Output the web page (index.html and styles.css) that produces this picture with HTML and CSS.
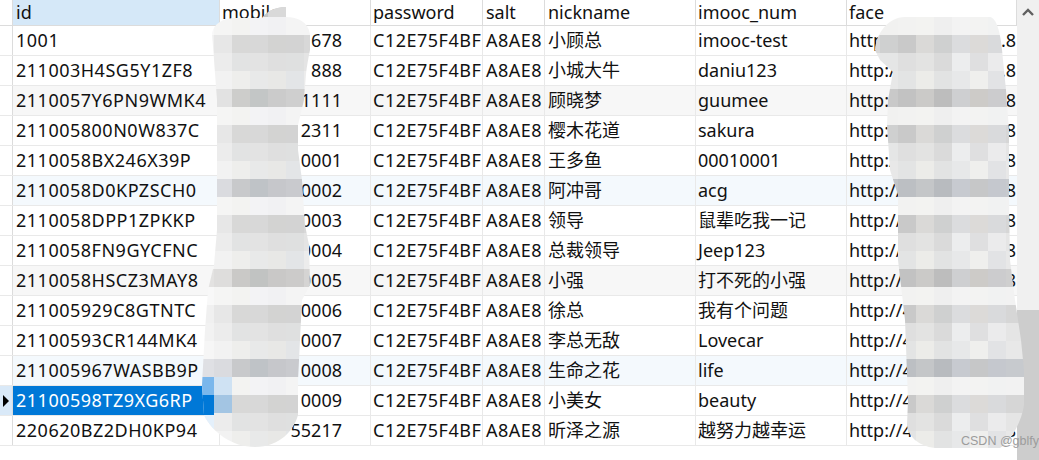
FILE: index.html
```html
<!DOCTYPE html>
<html lang="zh-CN">
<head>
<meta charset="utf-8">
<title>users</title>
<link rel="stylesheet" href="styles.css">
</head>
<body>
<div class="app">
  <div class="grid">
    <div class="row head">
      <div class="gut"></div><div class="c on">id</div><div class="c">mobile</div><div class="c">password</div><div class="c">salt</div><div class="c">nickname</div><div class="c">imooc_num</div><div class="c">face</div>
    </div>
    <div class="row">
      <div class="gut"></div><div class="c">1001</div><div class="c mob">678</div><div class="c">C12E75F4BF</div><div class="c">A8AE8</div><div class="c">小顾总</div><div class="c">imooc-test</div><div class="c url"><span>http://4</span><span>.8</span></div>
    </div>
    <div class="row">
      <div class="gut"></div><div class="c">211003H4SG5Y1ZF8</div><div class="c mob">888</div><div class="c">C12E75F4BF</div><div class="c">A8AE8</div><div class="c">小城大牛</div><div class="c">daniu123</div><div class="c url"><span>http://4</span><span>.8</span></div>
    </div>
    <div class="row grey">
      <div class="gut"></div><div class="c">2110057Y6PN9WMK4</div><div class="c mob">1111</div><div class="c">C12E75F4BF</div><div class="c">A8AE8</div><div class="c">顾晓梦</div><div class="c">guumee</div><div class="c url"><span>http://4</span><span>.8</span></div>
    </div>
    <div class="row">
      <div class="gut"></div><div class="c">211005800N0W837C</div><div class="c mob">2311</div><div class="c">C12E75F4BF</div><div class="c">A8AE8</div><div class="c">樱木花道</div><div class="c">sakura</div><div class="c url"><span>http://4</span><span>.8</span></div>
    </div>
    <div class="row">
      <div class="gut"></div><div class="c">2110058BX246X39P</div><div class="c mob">0001</div><div class="c">C12E75F4BF</div><div class="c">A8AE8</div><div class="c">王多鱼</div><div class="c">00010001</div><div class="c url"><span>http://4</span><span>.8</span></div>
    </div>
    <div class="row tint">
      <div class="gut"></div><div class="c">2110058D0KPZSCH0</div><div class="c mob">0002</div><div class="c">C12E75F4BF</div><div class="c">A8AE8</div><div class="c">阿冲哥</div><div class="c">acg</div><div class="c url"><span>http://4</span><span>.8</span></div>
    </div>
    <div class="row">
      <div class="gut"></div><div class="c">2110058DPP1ZPKKP</div><div class="c mob">0003</div><div class="c">C12E75F4BF</div><div class="c">A8AE8</div><div class="c">领导</div><div class="c">鼠辈吃我一记</div><div class="c url"><span>http://4</span><span>.8</span></div>
    </div>
    <div class="row">
      <div class="gut"></div><div class="c">2110058FN9GYCFNC</div><div class="c mob">0004</div><div class="c">C12E75F4BF</div><div class="c">A8AE8</div><div class="c">总裁领导</div><div class="c">Jeep123</div><div class="c url"><span>http://4</span><span>.8</span></div>
    </div>
    <div class="row grey">
      <div class="gut"></div><div class="c">2110058HSCZ3MAY8</div><div class="c mob">0005</div><div class="c">C12E75F4BF</div><div class="c">A8AE8</div><div class="c">小强</div><div class="c">打不死的小强</div><div class="c url"><span>http://4</span><span>.8</span></div>
    </div>
    <div class="row">
      <div class="gut"></div><div class="c">211005929C8GTNTC</div><div class="c mob">0006</div><div class="c">C12E75F4BF</div><div class="c">A8AE8</div><div class="c">徐总</div><div class="c">我有个问题</div><div class="c url"><span>http://4</span><span>.8</span></div>
    </div>
    <div class="row">
      <div class="gut"></div><div class="c">21100593CR144MK4</div><div class="c mob">0007</div><div class="c">C12E75F4BF</div><div class="c">A8AE8</div><div class="c">李总无敌</div><div class="c">Lovecar</div><div class="c url"><span>http://4</span><span>.8</span></div>
    </div>
    <div class="row tint">
      <div class="gut"></div><div class="c">211005967WASBB9P</div><div class="c mob">0008</div><div class="c">C12E75F4BF</div><div class="c">A8AE8</div><div class="c">生命之花</div><div class="c">life</div><div class="c url"><span>http://4</span><span>.8</span></div>
    </div>
    <div class="row">
      <div class="gut cur"><svg class="arrow" width="6" height="12" viewBox="0 0 6 12"><path d="M0 0L6 6L0 12Z"/></svg></div><div class="c sel">21100598TZ9XG6RP</div><div class="c mob">0009</div><div class="c">C12E75F4BF</div><div class="c">A8AE8</div><div class="c">小美女</div><div class="c">beauty</div><div class="c url"><span>http://4</span><span>.8</span></div>
    </div>
    <div class="row">
      <div class="gut"></div><div class="c">220620BZ2DH0KP94</div><div class="c mob">55217</div><div class="c">C12E75F4BF</div><div class="c">A8AE8</div><div class="c">昕泽之源</div><div class="c">越努力越幸运</div><div class="c url"><span>http://4</span><span>.8</span></div>
    </div>
  </div>
  <div class="scroll">
    <svg class="up" width="12" height="8" viewBox="0 0 12 8"><path d="M1 7L6 2L11 7" fill="none" stroke="#606060" stroke-width="2.4"/></svg>
    <div class="thumb"></div>
  </div>
  <svg class="mosaic" width="1039" height="460" viewBox="0 0 1039 460" shape-rendering="crispEdges">
    <defs>
      <pattern id="tl" patternUnits="userSpaceOnUse" x="196" y="17" width="126" height="90">
        <rect x="0" y="0" width="18" height="18" fill="#f8f8f8"/><rect x="18" y="0" width="18" height="18" fill="#f5f5f4"/><rect x="36" y="0" width="18" height="18" fill="#f3f3f1"/><rect x="54" y="0" width="18" height="18" fill="#f3f3f5"/><rect x="72" y="0" width="18" height="18" fill="#f1f1f3"/><rect x="90" y="0" width="18" height="18" fill="#f4f4f4"/><rect x="108" y="0" width="18" height="18" fill="#f4f4f4"/>
        <rect x="0" y="18" width="18" height="18" fill="#f0f0f0"/><rect x="18" y="18" width="18" height="18" fill="#e7e7e7"/><rect x="36" y="18" width="18" height="18" fill="#d8d8d7"/><rect x="54" y="18" width="18" height="18" fill="#d8d8d8"/><rect x="72" y="18" width="18" height="18" fill="#d3d3d2"/><rect x="90" y="18" width="18" height="18" fill="#d3d3d3"/><rect x="108" y="18" width="18" height="18" fill="#d8d8d8"/>
        <rect x="0" y="36" width="18" height="18" fill="#f2f2f2"/><rect x="18" y="36" width="18" height="18" fill="#ececec"/><rect x="36" y="36" width="18" height="18" fill="#e2e3e3"/><rect x="54" y="36" width="18" height="18" fill="#e3e3e3"/><rect x="72" y="36" width="18" height="18" fill="#dfdfdf"/><rect x="90" y="36" width="18" height="18" fill="#dfe0e0"/><rect x="108" y="36" width="18" height="18" fill="#e4e4e4"/>
        <rect x="0" y="54" width="18" height="18" fill="#f6f6f6"/><rect x="18" y="54" width="18" height="18" fill="#f2f2f2"/><rect x="36" y="54" width="18" height="18" fill="#eeeeec"/><rect x="54" y="54" width="18" height="18" fill="#e8e9e9"/><rect x="72" y="54" width="18" height="18" fill="#e8e8e6"/><rect x="90" y="54" width="18" height="18" fill="#e3e5e7"/><rect x="108" y="54" width="18" height="18" fill="#ececec"/>
        <rect x="0" y="72" width="18" height="18" fill="#e8e8e8"/><rect x="18" y="72" width="18" height="18" fill="#e2e2e2"/><rect x="36" y="72" width="18" height="18" fill="#cdcdcb"/><rect x="54" y="72" width="18" height="18" fill="#c3c6c6"/><rect x="72" y="72" width="18" height="18" fill="#cbcbcb"/><rect x="90" y="72" width="18" height="18" fill="#cfcfcf"/><rect x="108" y="72" width="18" height="18" fill="#d8d8d8"/>
      </pattern>
      <pattern id="tr" patternUnits="userSpaceOnUse" x="862" y="17" width="162" height="90">
        <rect x="0" y="0" width="18" height="18" fill="#f3f3f3"/><rect x="18" y="0" width="18" height="18" fill="#f1f1f0"/><rect x="36" y="0" width="18" height="18" fill="#f2f2f1"/><rect x="54" y="0" width="18" height="18" fill="#f3f3f1"/><rect x="72" y="0" width="18" height="18" fill="#efefef"/><rect x="90" y="0" width="18" height="18" fill="#f3f3f3"/><rect x="108" y="0" width="18" height="18" fill="#f3f3f2"/><rect x="126" y="0" width="18" height="18" fill="#f1f2f2"/><rect x="144" y="0" width="18" height="18" fill="#f2f2f2"/>
        <rect x="0" y="18" width="18" height="18" fill="#d8d8d8"/><rect x="18" y="18" width="18" height="18" fill="#cfd0d0"/><rect x="36" y="18" width="18" height="18" fill="#c9c9c9"/><rect x="54" y="18" width="18" height="18" fill="#dad9d7"/><rect x="72" y="18" width="18" height="18" fill="#cfd0d0"/><rect x="90" y="18" width="18" height="18" fill="#dbdcde"/><rect x="108" y="18" width="18" height="18" fill="#dcdad8"/><rect x="126" y="18" width="18" height="18" fill="#d9dadc"/><rect x="144" y="18" width="18" height="18" fill="#d6d6d6"/>
        <rect x="0" y="36" width="18" height="18" fill="#e8e8e8"/><rect x="18" y="36" width="18" height="18" fill="#e5e6e6"/><rect x="36" y="36" width="18" height="18" fill="#dfdfdf"/><rect x="54" y="36" width="18" height="18" fill="#e3e3e2"/><rect x="72" y="36" width="18" height="18" fill="#dadada"/><rect x="90" y="36" width="18" height="18" fill="#ecedee"/><rect x="108" y="36" width="18" height="18" fill="#dfdfe0"/><rect x="126" y="36" width="18" height="18" fill="#ebebec"/><rect x="144" y="36" width="18" height="18" fill="#e5e5e5"/>
        <rect x="0" y="54" width="18" height="18" fill="#ececec"/><rect x="18" y="54" width="18" height="18" fill="#e8e8e8"/><rect x="36" y="54" width="18" height="18" fill="#e3e4e4"/><rect x="54" y="54" width="18" height="18" fill="#ecece9"/><rect x="72" y="54" width="18" height="18" fill="#e2e3e3"/><rect x="90" y="54" width="18" height="18" fill="#e7e8e9"/><rect x="108" y="54" width="18" height="18" fill="#efefed"/><rect x="126" y="54" width="18" height="18" fill="#e2e3e5"/><rect x="144" y="54" width="18" height="18" fill="#e8e8e8"/>
        <rect x="0" y="72" width="18" height="18" fill="#d4d4d4"/><rect x="18" y="72" width="18" height="18" fill="#c9c9c9"/><rect x="36" y="72" width="18" height="18" fill="#c2c2c2"/><rect x="54" y="72" width="18" height="18" fill="#cbcac8"/><rect x="72" y="72" width="18" height="18" fill="#bdbdbd"/><rect x="90" y="72" width="18" height="18" fill="#cecfd1"/><rect x="108" y="72" width="18" height="18" fill="#cdcbc8"/><rect x="126" y="72" width="18" height="18" fill="#ccccce"/><rect x="144" y="72" width="18" height="18" fill="#cfcfcf"/>
      </pattern>
      <clipPath id="cl"><path d="M212 33C214 24 222 18 236 18L262 18C266 12 274 7 286 7L286 17C298 17 308 22 310 34L310 50C308 60 307 66 306 74L304 100L298 125L298 150L302 180L305 225L309 245L310 285L302 300L300 340L298 380L298 415C294 430 280 447 255 447C232 447 212 432 204 415L202 385L205 330L208 290L214 265L217 230L217 100L214 60Z" shape-rendering="geometricPrecision"/></clipPath>
      <clipPath id="cr"><path d="M875 50C876 34 888 17 905 17L990 17C996 18 1001 30 1003 60L1006 90L1009 130L1009 200L1010 260L1015 300L1021 340L1024 370L1024 405C1022 420 1012 440 1000 448L935 448C918 446 908 436 907 425L908 400L905 320L898 260L898 195L890 170L887 125L888 100L893 72L880 60Z" shape-rendering="geometricPrecision"/></clipPath>
    </defs>
    <g clip-path="url(#cl)">
      <rect x="196" y="0" width="126" height="460" fill="url(#tl)"/>
      <rect x="196" y="179" width="126" height="18" fill="#a8b4d0" opacity=".14"/>
      <rect x="196" y="359" width="126" height="18" fill="#a8b4d0" opacity=".14"/>
      <rect x="196" y="269" width="126" height="18" fill="#b0aa9c" opacity=".08"/>
      <rect x="196" y="377" width="18" height="18" fill="#7ab7ec"/>
      <rect x="214" y="377" width="18" height="18" fill="#cfe2f3"/>
      <rect x="196" y="395" width="18" height="20" fill="#0078d7"/>
      <rect x="214" y="395" width="18" height="18" fill="#a3c5e3"/>
      <rect x="196" y="415" width="18" height="16" fill="#e4f0fb"/>
      <rect x="268" y="7" width="18" height="10" fill="#d9d9d9"/>
    </g>
    <g clip-path="url(#cr)">
      <rect x="862" y="0" width="177" height="460" fill="url(#tr)"/>
      <rect x="862" y="179" width="177" height="18" fill="#9fb0d0" opacity=".14"/>
      <rect x="862" y="359" width="177" height="18" fill="#9fb0d0" opacity=".14"/>
    </g>
  </svg>
  <div class="mark">CSDN @gblfy</div>
</div>
</body>
</html>
```
FILE: styles.css
```css
html, body { margin: 0; padding: 0; background: #fff; }
.app {
  position: relative;
  display: flex;
  width: 1039px;
  height: 460px;
  overflow: hidden;
  font-family: "Noto Sans", "Noto Sans CJK SC", sans-serif;
  font-size: 18px;
  color: #111;
}
.grid { width: 1017px; flex: none; }
.row {
  display: grid;
  grid-template-columns: 13px 207px 151px 112px 62px 151px 151px 170px;
  height: 30px;
  border-bottom: 1px solid #e9e9e9;
  box-sizing: border-box;
  line-height: 29px;
}
.row.head { height: 26px; line-height: 24px; border-bottom: 1px solid #dcdcdc; }
.grey { background: #f7f7f7; }
.tint { background: #f4f9fd; }
.gut { background: #fff; border-right: 1px solid #dcdcdc; display: flex; align-items: center; justify-content: center; }
.cur { background: #d9e9f8; }
.arrow { fill: #000; }
.c {
  padding-left: 2px;
  border-right: 1px solid #e9e9e9;
  overflow: hidden;
  white-space: nowrap;
  min-width: 0;
}
.row .c:nth-child(2), .row .c:nth-child(5), .row .c:nth-child(6) { padding-left: 3px; }
.row:not(.head) .c:nth-child(2), .row:not(.head) .c:nth-child(4), .row:not(.head) .c:nth-child(5) { letter-spacing: .5px; }
.head .c { border-right-color: #dcdcdc; }
.c.on { background: #d5e8f8; }
.c.sel { background: #0078d7; color: #fff; }
.c.mob { text-align: right; padding-right: 28px; }
.c.url { display: flex; justify-content: space-between; border-right: 0; padding-right: 1px; }
.scroll { flex: 1; background: #f0f0f0; display: flex; flex-direction: column; align-items: center; }
.up { margin-top: 8px; height: 8px; flex: none; }
.thumb { margin-top: auto; width: 100%; height: 150px; background: #cdcdcd; }
.mosaic { position: absolute; left: 0; top: 0; }
.mark {
  position: absolute;
  left: 961px;
  top: 434px;
  font-family: "Liberation Sans", sans-serif;
  font-size: 12.5px;
  line-height: 15px;
  color: #9c9c9c;
}
```
